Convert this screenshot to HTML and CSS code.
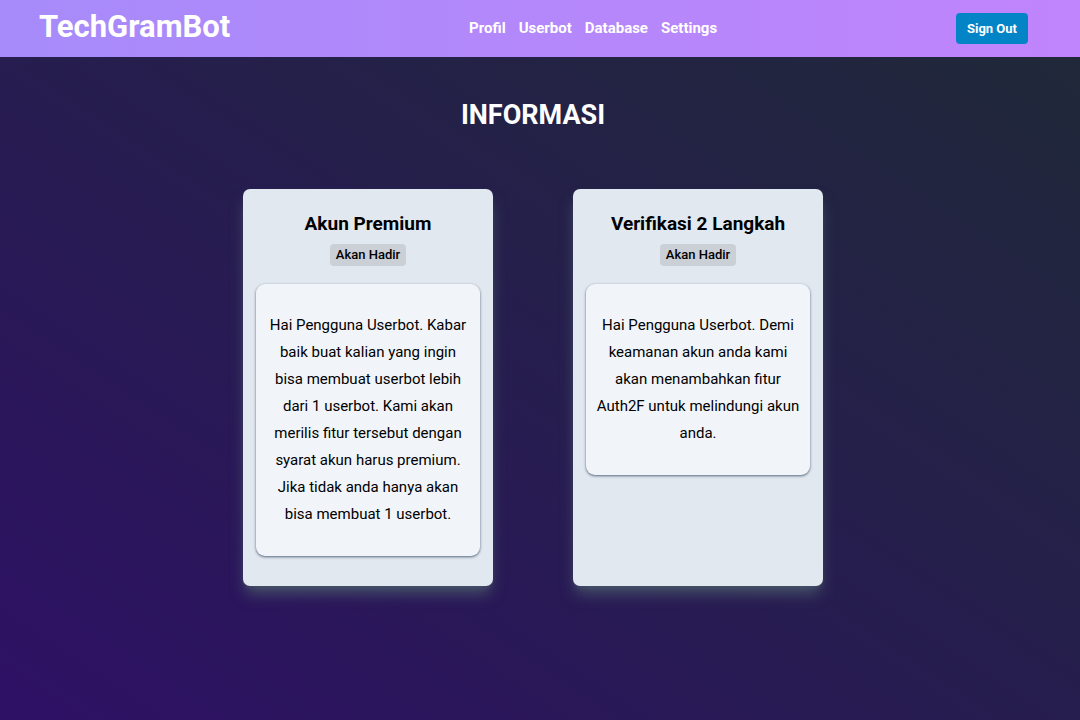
FILE: index.html
```html
<!DOCTYPE html>
<html lang="id">
<head>
<meta charset="utf-8">
<meta name="viewport" content="width=device-width, initial-scale=1">
<title>TechGramBot</title>
<link rel="stylesheet" href="styles.css">
</head>
<body>
<header class="navbar">
  <a class="brand" href="#">TechGramBot</a>
  <nav class="menu">
    <a href="#">Profil</a>
    <a href="#">Userbot</a>
    <a href="#">Database</a>
    <a href="#">Settings</a>
  </nav>
  <button class="sign-out" type="button">Sign Out</button>
</header>
<main class="content">
  <h1 class="heading">INFORMASI</h1>
  <section class="cards">
    <article class="card">
      <h2 class="card-title">Akun Premium</h2>
      <span class="badge">Akan Hadir</span>
      <p class="card-text">Hai Pengguna Userbot. Kabar baik buat kalian yang ingin bisa membuat userbot lebih dari 1 userbot. Kami akan merilis fitur tersebut dengan syarat akun harus premium. Jika tidak anda hanya akan bisa membuat 1 userbot.</p>
    </article>
    <article class="card">
      <h2 class="card-title">Verifikasi 2 Langkah</h2>
      <span class="badge">Akan Hadir</span>
      <p class="card-text">Hai Pengguna Userbot. Demi keamanan akun anda kami akan menambahkan fitur Auth2F untuk melindungi akun anda.</p>
    </article>
  </section>
</main>
</body>
</html>
```
FILE: styles.css
```css
* {
  box-sizing: border-box;
  margin: 0;
}

body {
  min-height: 100vh;
  background: linear-gradient(to top right, #2e1065, #261e4e 50%, #1f2937);
  font-family: Roboto, sans-serif;
  color: #000;
}

.navbar {
  display: flex;
  align-items: center;
  justify-content: space-between;
  min-height: 57px;
  padding: 0 52px 0 39px;
  background: linear-gradient(to right, #a78bfa, #c084fc);
}

.brand {
  padding-bottom: 4px;
  font-size: 31px;
  line-height: 40px;
  font-weight: 700;
  color: #fff;
  text-decoration: none;
}

.menu {
  display: flex;
  gap: 13px;
  padding-bottom: 2px;
  font-size: 15px;
  font-weight: 700;
}

.menu a {
  color: #fff;
  text-decoration: none;
}

.sign-out {
  padding: 0 11px;
  border: 0;
  border-radius: 4px;
  background: #0284c7;
  color: #fff;
  font-family: inherit;
  font-size: 13px;
  font-weight: 700;
  line-height: 31px;
}

.content {
  padding: 37px 14px 40px 0;
}

.heading {
  font-size: 27px;
  line-height: 42px;
  font-weight: 700;
  color: #fff;
  text-align: center;
}

.cards {
  display: flex;
  flex-wrap: wrap;
  justify-content: center;
  gap: 80px;
  margin-top: 53px;
}

.card {
  display: flex;
  flex-direction: column;
  align-items: center;
  width: 250px;
  padding: 21px 13px 30px;
  border-radius: 7px;
  background: #e2e8f0;
  box-shadow: 0 10px 15px -3px #475569, 0 4px 6px -4px #475569;
  text-align: center;
}

.card-title {
  font-size: 19px;
  line-height: 28px;
  font-weight: 700;
}

.badge {
  margin-top: 6px;
  padding: 0 6px;
  border-radius: 4px;
  background: #cbcfd6;
  font-size: 13px;
  font-weight: 500;
  line-height: 22px;
}

.card-text {
  width: 100%;
  margin-top: 18px;
  padding: 28px 10px;
  border-radius: 9px;
  background: #f1f5f9;
  box-shadow: 0 1px 3px #64748b, 0 1px 2px -1px #64748b;
  font-size: 15px;
  line-height: 27px;
}
```
